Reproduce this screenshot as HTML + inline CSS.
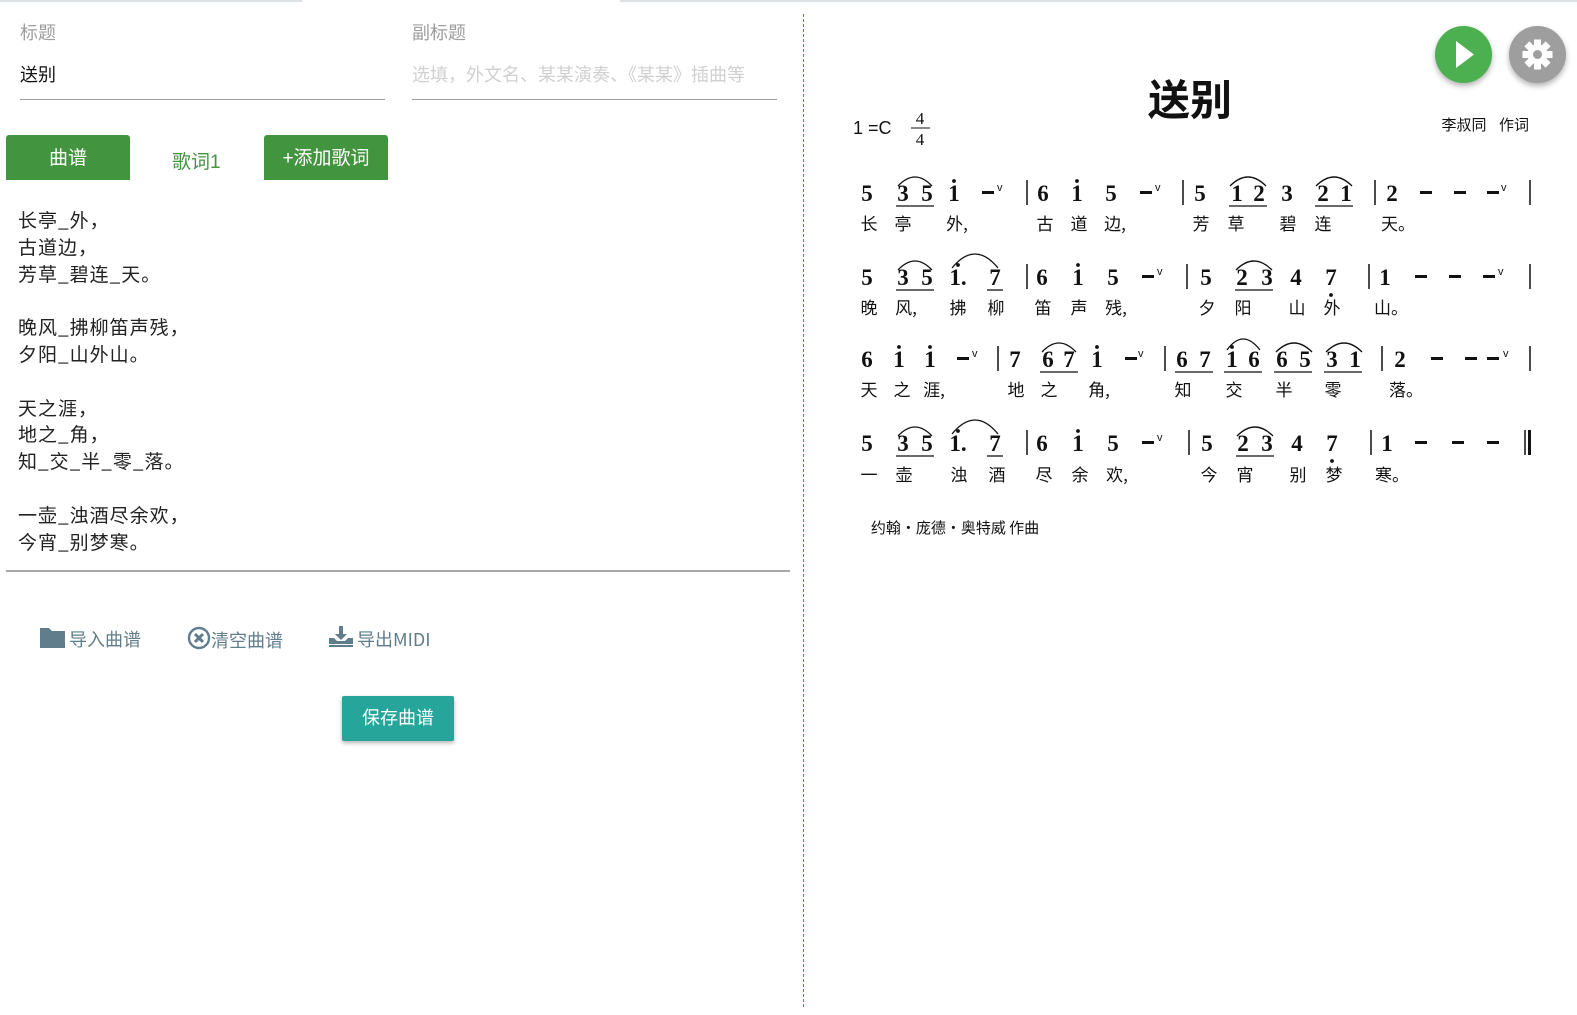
<!DOCTYPE html>
<html><head><meta charset="utf-8">
<style>
*{margin:0;padding:0;box-sizing:border-box}
body{width:1577px;height:1015px;background:#fff;position:relative;overflow:hidden;font-family:"Liberation Sans","Noto Sans CJK SC",sans-serif}
.abs{position:absolute}
.lbl{color:#9e9e9e;font-size:18px}
.topbar{position:absolute;top:0;height:2px;background:#dde1e6}
.tab{position:absolute;top:135px;height:45px;width:124px;color:#fff;background:#43943f;font-size:19px;text-align:center;line-height:47px;border-radius:3px 3px 0 0}
.lyr{position:absolute;left:18px;top:207px;font-size:19px;line-height:26.8px;color:#222;letter-spacing:1px;font-family:"Noto Sans CJK SC",sans-serif}
.act{position:absolute;top:626px;font-size:18px;color:#607d8b;font-family:"Noto Sans CJK SC",sans-serif}
svg text{font-family:"Liberation Serif",serif}
.n{font-size:23px;font-weight:bold;text-anchor:middle;fill:#111}
.l{font-family:"Noto Sans CJK SC",sans-serif!important;font-size:17px;text-anchor:middle;fill:#111}
.v{font-family:"Liberation Sans",sans-serif!important;font-size:11px;fill:#111}
</style></head><body>
<div class="topbar" style="left:0;width:302px"></div>
<div class="topbar" style="left:620px;width:957px"></div>

<div class="abs lbl" style="left:20px;top:19px">标题</div>
<div class="abs" style="left:20px;top:61px;font-size:18px;color:#111">送别</div>
<div class="abs" style="left:20px;top:99px;width:365px;height:1px;background:#9e9e9e"></div>
<div class="abs lbl" style="left:412px;top:19px">副标题</div>
<div class="abs" style="left:412px;top:61px;font-size:18px;color:#d0d0d0">选填，外文名、某某演奏、《某某》插曲等</div>
<div class="abs" style="left:412px;top:99px;width:365px;height:1px;background:#9e9e9e"></div>

<div class="tab" style="left:6px">曲谱</div>
<div class="abs" style="left:172px;top:147px;font-size:19px;color:#43943f">歌词1</div>
<div class="tab" style="left:264px">+添加歌词</div>

<div class="lyr">长亭_外，<br>古道边，<br>芳草_碧连_天。<br><br>晚风_拂柳笛声残，<br>夕阳_山外山。<br><br>天之涯，<br>地之_角，<br>知_交_半_零_落。<br><br>一壶_浊酒尽余欢，<br>今宵_别梦寒。</div>
<div class="abs" style="left:6px;top:570px;width:784px;height:2px;background:#a8a8a8"></div>

<div class="act" style="left:40px"><svg width="25" height="20" viewBox="0 0 25 20" style="vertical-align:-2px"><path d="M0 0h9l3 3h13v17H0z" fill="#607d8b"/></svg> 导入曲谱</div>
<div class="act" style="left:187px"><svg width="24" height="24" viewBox="0 0 24 24" style="vertical-align:-3px"><circle cx="12" cy="12" r="10" fill="none" stroke="#607d8b" stroke-width="2.4"/><path d="M8 8l8 8M16 8l-8 8" stroke="#607d8b" stroke-width="3"/></svg>清空曲谱</div>
<div class="act" style="left:329px"><svg width="24" height="22" viewBox="0 0 24 22" style="vertical-align:-2px"><path d="M10 0h4v8h4l-6 6-6-6h4z" fill="#607d8b"/><path d="M0 12h5l3 3h8l3-3h5v6H0z" fill="#607d8b"/><rect x="0" y="19" width="24" height="2" fill="#607d8b"/></svg> 导出MIDI</div>

<div class="abs" style="left:342px;top:696px;width:112px;height:45px;background:#26a69a;color:#fff;font-size:18px;text-align:center;line-height:45px;border-radius:2px;box-shadow:0 2px 4px rgba(0,0,0,.3)">保存曲谱</div>

<div class="abs" style="left:803px;top:14px;height:993px;border-left:1px dashed #43943f"></div>

<div class="abs" style="left:1435px;top:26px;width:57px;height:57px;border-radius:50%;background:#4caf50;box-shadow:0 3px 6px rgba(0,0,0,.3)"><svg width="57" height="57"><path d="M21 15L39 28.5 21 42z" fill="#fff"/></svg></div>
<div class="abs" style="left:1509px;top:26px;width:57px;height:57px;border-radius:50%;background:#9e9e9e;box-shadow:0 3px 6px rgba(0,0,0,.3)"><svg width="57" height="57" viewBox="0 0 57 57"><g transform="translate(28.5 28.5)" fill="#fff"><circle r="10"/><g id="t"><rect x="-3.5" y="-15" width="7" height="6"/></g><use href="#t" transform="rotate(45)"/><use href="#t" transform="rotate(90)"/><use href="#t" transform="rotate(135)"/><use href="#t" transform="rotate(180)"/><use href="#t" transform="rotate(225)"/><use href="#t" transform="rotate(270)"/><use href="#t" transform="rotate(315)"/></g><circle cx="28.5" cy="28.5" r="4.5" fill="#9e9e9e"/></svg></div>

<svg class="abs" style="left:0;top:0" width="1577" height="1015">
<text x="1190" y="115" text-anchor="middle" style="font-family:'Noto Sans CJK SC',sans-serif;font-weight:bold;font-size:42px" fill="#111">送别</text>
<text x="853" y="134" style="font-family:'Liberation Sans',sans-serif;font-size:18px" fill="#111">1 =C</text>
<text x="920" y="124" text-anchor="middle" style="font-size:17px" fill="#111">4</text>
<line x1="911" y1="128" x2="930" y2="128" stroke="#111"/>
<text x="920" y="145" text-anchor="middle" style="font-size:17px" fill="#111">4</text>
<text x="1464" y="130" text-anchor="middle" class="l" style="font-size:15px">李叔同</text>
<text x="1514" y="130" text-anchor="middle" class="l" style="font-size:15px">作词</text>
<text x="955" y="533" class="l" style="font-size:15px">约翰·庞德·奥特威 作曲</text>

<g stroke="#111" stroke-width="1.3" fill="none">
<path d="M898 186Q915 168 932 186"/><path d="M1230 186Q1248 168 1266 186"/><path d="M1316 186Q1334 168 1352 186"/>
<line x1="896" y1="206" x2="934" y2="206"/><line x1="1229" y1="206" x2="1267" y2="206"/><line x1="1315" y1="206" x2="1353" y2="206"/>
<path d="M898 270Q915 252 932 270"/><path d="M952 268Q975 240 998 268"/><path d="M1236 270Q1254 252 1272 270"/>
<line x1="896" y1="290" x2="934" y2="290"/><line x1="987" y1="290" x2="1003" y2="290"/><line x1="1235" y1="290" x2="1273" y2="290"/>
<path d="M1042 352Q1059 334 1076 352"/><path d="M1227 350Q1243 328 1260 350"/><path d="M1276 352Q1294 334 1312 352"/><path d="M1326 352Q1344 334 1362 352"/>
<line x1="1040" y1="372" x2="1078" y2="372"/><line x1="1175" y1="372" x2="1213" y2="372"/><line x1="1224" y1="372" x2="1262" y2="372"/><line x1="1274" y1="372" x2="1312" y2="372"/><line x1="1324" y1="372" x2="1362" y2="372"/>
<path d="M898 436Q915 418 932 436"/><path d="M952 434Q975 406 998 434"/><path d="M1237 436Q1255 418 1273 436"/>
<line x1="896" y1="456" x2="934" y2="456"/><line x1="987" y1="456" x2="1003" y2="456"/><line x1="1236" y1="456" x2="1274" y2="456"/>
</g>
<g stroke="#111" stroke-width="1.5">
<line x1="1027" y1="180" x2="1027" y2="205"/><line x1="1183" y1="180" x2="1183" y2="205"/><line x1="1375" y1="180" x2="1375" y2="205"/><line x1="1530" y1="180" x2="1530" y2="205"/>
<line x1="1027" y1="264" x2="1027" y2="289"/><line x1="1187" y1="264" x2="1187" y2="289"/><line x1="1369" y1="264" x2="1369" y2="289"/><line x1="1530" y1="264" x2="1530" y2="289"/>
<line x1="998" y1="346" x2="998" y2="371"/><line x1="1165" y1="346" x2="1165" y2="371"/><line x1="1382" y1="346" x2="1382" y2="371"/><line x1="1530" y1="346" x2="1530" y2="371"/>
<line x1="1027" y1="430" x2="1027" y2="455"/><line x1="1189" y1="430" x2="1189" y2="455"/><line x1="1371" y1="430" x2="1371" y2="455"/><line x1="1525" y1="430" x2="1525" y2="455"/>
</g>
<rect x="1528" y="430" width="3" height="25" fill="#111"/>
<g fill="#111">
<circle cx="954" cy="181" r="1.9"/><circle cx="1077" cy="181" r="1.9"/>
<circle cx="958" cy="265" r="1.9"/><circle cx="1078" cy="265" r="1.9"/>
<circle cx="899" cy="347" r="1.9"/><circle cx="930" cy="347" r="1.9"/><circle cx="1097" cy="347" r="1.9"/><circle cx="1232" cy="347" r="1.9"/>
<circle cx="958" cy="431" r="1.9"/><circle cx="1078" cy="431" r="1.9"/>
<circle cx="1331" cy="295" r="1.9"/><circle cx="1332" cy="461" r="1.9"/>
<rect x="982" y="191" width="12" height="3"/><rect x="1140" y="191" width="12" height="3"/><rect x="1420" y="191" width="12" height="3"/><rect x="1454" y="191" width="12" height="3"/><rect x="1487" y="191" width="12" height="3"/>
<rect x="1142" y="275" width="12" height="3"/><rect x="1415" y="275" width="12" height="3"/><rect x="1449" y="275" width="12" height="3"/><rect x="1483" y="275" width="12" height="3"/>
<rect x="957" y="357" width="12" height="3"/><rect x="1125" y="357" width="12" height="3"/><rect x="1431" y="357" width="12" height="3"/><rect x="1465" y="357" width="12" height="3"/><rect x="1487" y="357" width="12" height="3"/>
<rect x="1142" y="441" width="12" height="3"/><rect x="1415" y="441" width="12" height="3"/><rect x="1452" y="441" width="12" height="3"/><rect x="1487" y="441" width="12" height="3"/>
</g>
<g>
<text class="v" x="997" y="191">v</text><text class="v" x="1155" y="191">v</text><text class="v" x="1501" y="191">v</text>
<text class="v" x="1157" y="275">v</text><text class="v" x="1498" y="275">v</text>
<text class="v" x="972" y="357">v</text><text class="v" x="1138" y="357">v</text><text class="v" x="1503" y="357">v</text>
<text class="v" x="1157" y="441">v</text>
</g>
<text class="n" x="867" y="201">5</text><text class="n" x="903" y="201">3</text><text class="n" x="927" y="201">5</text><text class="n" x="954" y="201">1</text>
<text class="n" x="1043" y="201">6</text><text class="n" x="1077" y="201">1</text><text class="n" x="1111" y="201">5</text>
<text class="n" x="1200" y="201">5</text><text class="n" x="1237" y="201">1</text><text class="n" x="1259" y="201">2</text><text class="n" x="1287" y="201">3</text><text class="n" x="1323" y="201">2</text><text class="n" x="1346" y="201">1</text>
<text class="n" x="1392" y="201">2</text>
<text class="l" x="869" y="230">长</text><text class="l" x="903" y="230">亭</text><text class="l" x="957" y="230">外,</text><text class="l" x="1045" y="230">古</text><text class="l" x="1079" y="230">道</text><text class="l" x="1115" y="230">边,</text><text class="l" x="1201" y="230">芳</text><text class="l" x="1236" y="230">草</text><text class="l" x="1288" y="230">碧</text><text class="l" x="1323" y="230">连</text><text class="l" x="1398" y="230">天。</text>
<text class="n" x="867" y="285">5</text><text class="n" x="903" y="285">3</text><text class="n" x="927" y="285">5</text><text class="n" x="958" y="285">1.</text><text class="n" x="995" y="285">7</text>
<text class="n" x="1042" y="285">6</text><text class="n" x="1078" y="285">1</text><text class="n" x="1113" y="285">5</text>
<text class="n" x="1206" y="285">5</text><text class="n" x="1242" y="285">2</text><text class="n" x="1267" y="285">3</text><text class="n" x="1296" y="285">4</text><text class="n" x="1331" y="285">7</text>
<text class="n" x="1385" y="285">1</text>
<text class="l" x="869" y="314">晚</text><text class="l" x="906" y="314">风,</text><text class="l" x="958" y="314">拂</text><text class="l" x="996" y="314">柳</text><text class="l" x="1043" y="314">笛</text><text class="l" x="1079" y="314">声</text><text class="l" x="1116" y="314">残,</text><text class="l" x="1207" y="314">夕</text><text class="l" x="1243" y="314">阳</text><text class="l" x="1297" y="314">山</text><text class="l" x="1332" y="314">外</text><text class="l" x="1391" y="314">山。</text>
<text class="n" x="867" y="367">6</text><text class="n" x="899" y="367">1</text><text class="n" x="930" y="367">1</text>
<text class="n" x="1015" y="367">7</text><text class="n" x="1048" y="367">6</text><text class="n" x="1069" y="367">7</text><text class="n" x="1097" y="367">1</text>
<text class="n" x="1182" y="367">6</text><text class="n" x="1205" y="367">7</text><text class="n" x="1232" y="367">1</text><text class="n" x="1254" y="367">6</text><text class="n" x="1282" y="367">6</text><text class="n" x="1305" y="367">5</text><text class="n" x="1332" y="367">3</text><text class="n" x="1355" y="367">1</text>
<text class="n" x="1400" y="367">2</text>
<text class="l" x="869" y="396">天</text><text class="l" x="902" y="396">之</text><text class="l" x="934" y="396">涯,</text><text class="l" x="1016" y="396">地</text><text class="l" x="1049" y="396">之</text><text class="l" x="1099" y="396">角,</text><text class="l" x="1183" y="396">知</text><text class="l" x="1234" y="396">交</text><text class="l" x="1284" y="396">半</text><text class="l" x="1333" y="396">零</text><text class="l" x="1406" y="396">落。</text>
<text class="n" x="867" y="451">5</text><text class="n" x="903" y="451">3</text><text class="n" x="927" y="451">5</text><text class="n" x="958" y="451">1.</text><text class="n" x="995" y="451">7</text>
<text class="n" x="1042" y="451">6</text><text class="n" x="1078" y="451">1</text><text class="n" x="1113" y="451">5</text>
<text class="n" x="1207" y="451">5</text><text class="n" x="1243" y="451">2</text><text class="n" x="1267" y="451">3</text><text class="n" x="1297" y="451">4</text><text class="n" x="1332" y="451">7</text>
<text class="n" x="1387" y="451">1</text>
<text class="l" x="869" y="481">一</text><text class="l" x="904" y="481">壶</text><text class="l" x="959" y="481">浊</text><text class="l" x="997" y="481">酒</text><text class="l" x="1044" y="481">尽</text><text class="l" x="1080" y="481">余</text><text class="l" x="1117" y="481">欢,</text><text class="l" x="1209" y="481">今</text><text class="l" x="1245" y="481">宵</text><text class="l" x="1298" y="481">别</text><text class="l" x="1334" y="481">梦</text><text class="l" x="1392" y="481">寒。</text>
</svg>
</body></html>
